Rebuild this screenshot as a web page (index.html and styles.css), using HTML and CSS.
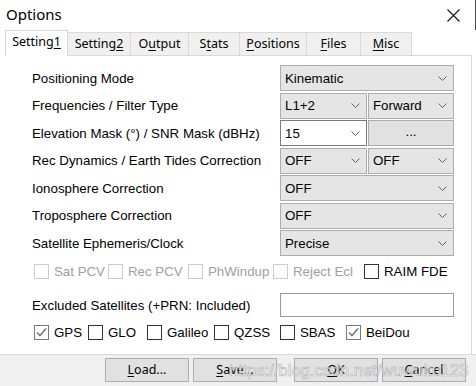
FILE: index.html
```html
<!DOCTYPE html>
<html>
<head>
<meta charset="utf-8">
<link rel="stylesheet" href="styles.css">
</head>
<body>
<div class="window">
  <div class="titlebar">
    <span class="title">Options</span>
    <svg class="close" width="13" height="13" viewBox="0 0 13 13"><path d="M0.5 0.5 L12.5 12.5 M12.5 0.5 L0.5 12.5" stroke="#111" stroke-width="1.1" fill="none"/></svg>
  </div>
  <div class="tabs">
    <div class="tab active t1">Setting<u>1</u></div>
    <div class="tab t2">Setting<u>2</u></div>
    <div class="tab t3">O<u>u</u>tput</div>
    <div class="tab t4">S<u>t</u>ats</div>
    <div class="tab t5"><u>P</u>ositions</div>
    <div class="tab t6"><u>F</u>iles</div>
    <div class="tab t7"><u>M</u>isc</div>
  </div>
  <div class="panel">
    <div class="form">
      <div class="row">
        <span class="label">Positioning Mode</span>
        <div class="combo span2"><span>Kinematic</span><svg class="chev" width="9" height="5" viewBox="0 0 9 5"><polyline points="0.5,0.5 4.5,4.5 8.5,0.5"/></svg></div>
      </div>
      <div class="row">
        <span class="label">Frequencies / Filter Type</span>
        <div class="combo"><span>L1+2</span><svg class="chev" width="9" height="5" viewBox="0 0 9 5"><polyline points="0.5,0.5 4.5,4.5 8.5,0.5"/></svg></div>
        <div class="combo"><span>Forward</span><svg class="chev" width="9" height="5" viewBox="0 0 9 5"><polyline points="0.5,0.5 4.5,4.5 8.5,0.5"/></svg></div>
      </div>
      <div class="row">
        <span class="label">Elevation Mask (°) / SNR Mask (dBHz)</span>
        <div class="combo edit"><span>15</span><svg class="chev" width="9" height="5" viewBox="0 0 9 5"><polyline points="0.5,0.5 4.5,4.5 8.5,0.5"/></svg></div>
        <div class="btn-dots">...</div>
      </div>
      <div class="row">
        <span class="label">Rec Dynamics / Earth Tides Correction</span>
        <div class="combo"><span>OFF</span><svg class="chev" width="9" height="5" viewBox="0 0 9 5"><polyline points="0.5,0.5 4.5,4.5 8.5,0.5"/></svg></div>
        <div class="combo"><span>OFF</span><svg class="chev" width="9" height="5" viewBox="0 0 9 5"><polyline points="0.5,0.5 4.5,4.5 8.5,0.5"/></svg></div>
      </div>
      <div class="row">
        <span class="label">Ionosphere Correction</span>
        <div class="combo span2"><span>OFF</span><svg class="chev" width="9" height="5" viewBox="0 0 9 5"><polyline points="0.5,0.5 4.5,4.5 8.5,0.5"/></svg></div>
      </div>
      <div class="row">
        <span class="label">Troposphere Correction</span>
        <div class="combo span2"><span>OFF</span><svg class="chev" width="9" height="5" viewBox="0 0 9 5"><polyline points="0.5,0.5 4.5,4.5 8.5,0.5"/></svg></div>
      </div>
      <div class="row">
        <span class="label">Satellite Ephemeris/Clock</span>
        <div class="combo span2"><span>Precise</span><svg class="chev" width="9" height="5" viewBox="0 0 9 5"><polyline points="0.5,0.5 4.5,4.5 8.5,0.5"/></svg></div>
      </div>
    </div>

    <div class="checks checks-a">
      <div class="chk disabled"><span class="box"></span>Sat PCV</div>
      <div class="chk disabled"><span class="box"></span>Rec PCV</div>
      <div class="chk disabled"><span class="box"></span>PhWindup</div>
      <div class="chk disabled"><span class="box"></span>Reject Ecl</div>
      <div class="chk"><span class="box"></span>RAIM FDE</div>
    </div>

    <div class="row excl">
      <span class="label">Excluded Satellites (+PRN: Included)</span>
      <div class="textbox span2"></div>
    </div>

    <div class="checks checks-b">
      <div class="chk"><span class="box checked"><svg width="13" height="13" viewBox="0 0 13 13"><polyline points="2,6.5 5,9.5 11,2.5"/></svg></span>GPS</div>
      <div class="chk"><span class="box"></span>GLO</div>
      <div class="chk"><span class="box"></span>Galileo</div>
      <div class="chk"><span class="box"></span>QZSS</div>
      <div class="chk"><span class="box"></span>SBAS</div>
      <div class="chk"><span class="box checked"><svg width="13" height="13" viewBox="0 0 13 13"><polyline points="2,6.5 5,9.5 11,2.5"/></svg></span>BeiDou</div>
    </div>
  </div>
  <div class="buttonbar">
    <div class="btngroup">
      <div class="btn"><u>L</u>oad...</div>
      <div class="btn"><u>S</u>ave...</div>
    </div>
    <div class="btngroup">
      <div class="btn"><u>O</u>K</div>
      <div class="btn"><u>C</u>ancel</div>
    </div>
  </div>
  <div class="watermark">https://blog.csdn.net/wuwuku123</div>
</div>
</body>
</html>
```

FILE: styles.css
```css
* { box-sizing: border-box; }
html, body { margin: 0; padding: 0; background: #fff; }
body { width: 476px; height: 386px; overflow: hidden; }

.window {
  position: relative;
  width: 476px;
  height: 386px;
  overflow: hidden;
  background: #fff;
  font-family: "Liberation Sans", Arial, sans-serif;
  font-size: 13.3px;
  color: #000;
}

.titlebar {
  height: 30px;
  display: flex;
  align-items: center;
  justify-content: space-between;
  padding: 0 15px 2px 6px;
  border-right: 1px solid #4a4a4a;
}
.title {
  font-family: "Noto Sans", "Open Sans", sans-serif;
  font-size: 15px;
  color: #000;
}
.close { display: block; margin-top: 2px; }

.tabs {
  height: 25px;
  display: flex;
  align-items: flex-end;
  padding-left: 5px;
  font-family: "Noto Sans", "Open Sans", sans-serif;
  font-size: 12.5px;
}
.tab {
  height: 23px;
  margin-right: -1px;
  border: 1px solid #d9d9d9;
  border-bottom: none;
  background: #f0f0f0;
  display: flex;
  align-items: center;
  justify-content: center;
  color: #000;
  padding-bottom: 1px;
}
.tab.active {
  position: relative;
  z-index: 1;
  height: 26px;
  margin-bottom: -1px;
  background: #fff;
  padding-bottom: 4px;
}
.tab u { text-underline-offset: 2px; }
.t1 { width: 63px; }
.t2 { width: 64px; }
.t3 { width: 59px; }
.t4 { width: 52px; }
.t5 { width: 68px; }
.t6 { width: 55px; }
.t7 { width: 52px; }

.panel {
  margin-left: 5px;
  width: 467px;
  height: 299px;
  border-top: 1px solid #d9d9d9;
  border-right: 1px solid #d9d9d9;
  padding: 9px 0 0 27px;
}

.form {
  display: flex;
  flex-direction: column;
  gap: 1.5px;
}
.row {
  display: grid;
  grid-template-columns: 247px 87px 86px;
  column-gap: 1px;
  height: 26px;
  align-items: stretch;
}
.label {
  display: flex;
  align-items: center;
  white-space: nowrap;
}
.span2 { grid-column: 2 / 4; }

.combo {
  display: flex;
  align-items: center;
  justify-content: space-between;
  background: #e5e5e5;
  border: 1px solid #adadad;
  padding: 0 6px 0 4px;
}
.combo.edit {
  background: #fff;
  border-color: #7a7a7a;
}
.chev polyline {
  fill: none;
  stroke: #606060;
  stroke-width: 1;
}
.btn-dots {
  display: flex;
  align-items: center;
  justify-content: center;
  background: #e1e1e1;
  border: 1px solid #adadad;
  padding-bottom: 3px;
}

.checks {
  display: grid;
  align-items: center;
  margin-left: 2px;
}
.checks-a {
  margin-top: 2px;
  height: 26px;
  grid-template-columns: 74px 80px 85px 91px auto;
}
.checks-b {
  height: 30px;
  grid-template-columns: 54px 59px 67px 66px 66px auto;
}
.chk {
  display: flex;
  align-items: center;
  gap: 5px;
  white-space: nowrap;
}
.box {
  width: 15px;
  height: 15px;
  border: 1px solid #333;
  background: #fff;
  display: flex;
  align-items: center;
  justify-content: center;
  flex: none;
}
.box.checked { border-color: #777; }
.box svg polyline { fill: none; stroke: #666; stroke-width: 1.2; }
.chk.disabled { color: #a0a0a0; }
.chk.disabled .box { border-color: #cccccc; }

.row.excl {
  margin-top: 9px;
  height: 24px;
}
.textbox {
  background: #fff;
  border: 1px solid #9a9a9a;
}

.buttonbar {
  height: 32px;
  background: #f0f0f0;
  border-top: 1px solid #dadada;
  display: flex;
  justify-content: flex-end;
  align-items: flex-start;
  padding: 3px 10px 0 0;
  gap: 17px;
  font-family: "Noto Sans", "Open Sans", sans-serif;
  font-size: 12.5px;
}
.btngroup { display: flex; gap: 4px; }
.btn {
  width: 84px;
  height: 24px;
  background: #e1e1e1;
  border: 1px solid #adadad;
  display: flex;
  align-items: center;
  justify-content: center;
  padding-bottom: 1px;
}
.btn u { text-underline-offset: 2px; }

.watermark {
  position: absolute;
  left: 229px;
  top: 360px;
  font-family: "Liberation Sans", Arial, sans-serif;
  font-size: 16.5px;
  line-height: 20px;
  color: rgba(255, 255, 255, 0.75);
  -webkit-text-stroke: 0.6px rgba(160, 160, 160, 0.8);
  white-space: nowrap;
  pointer-events: none;
}
```
